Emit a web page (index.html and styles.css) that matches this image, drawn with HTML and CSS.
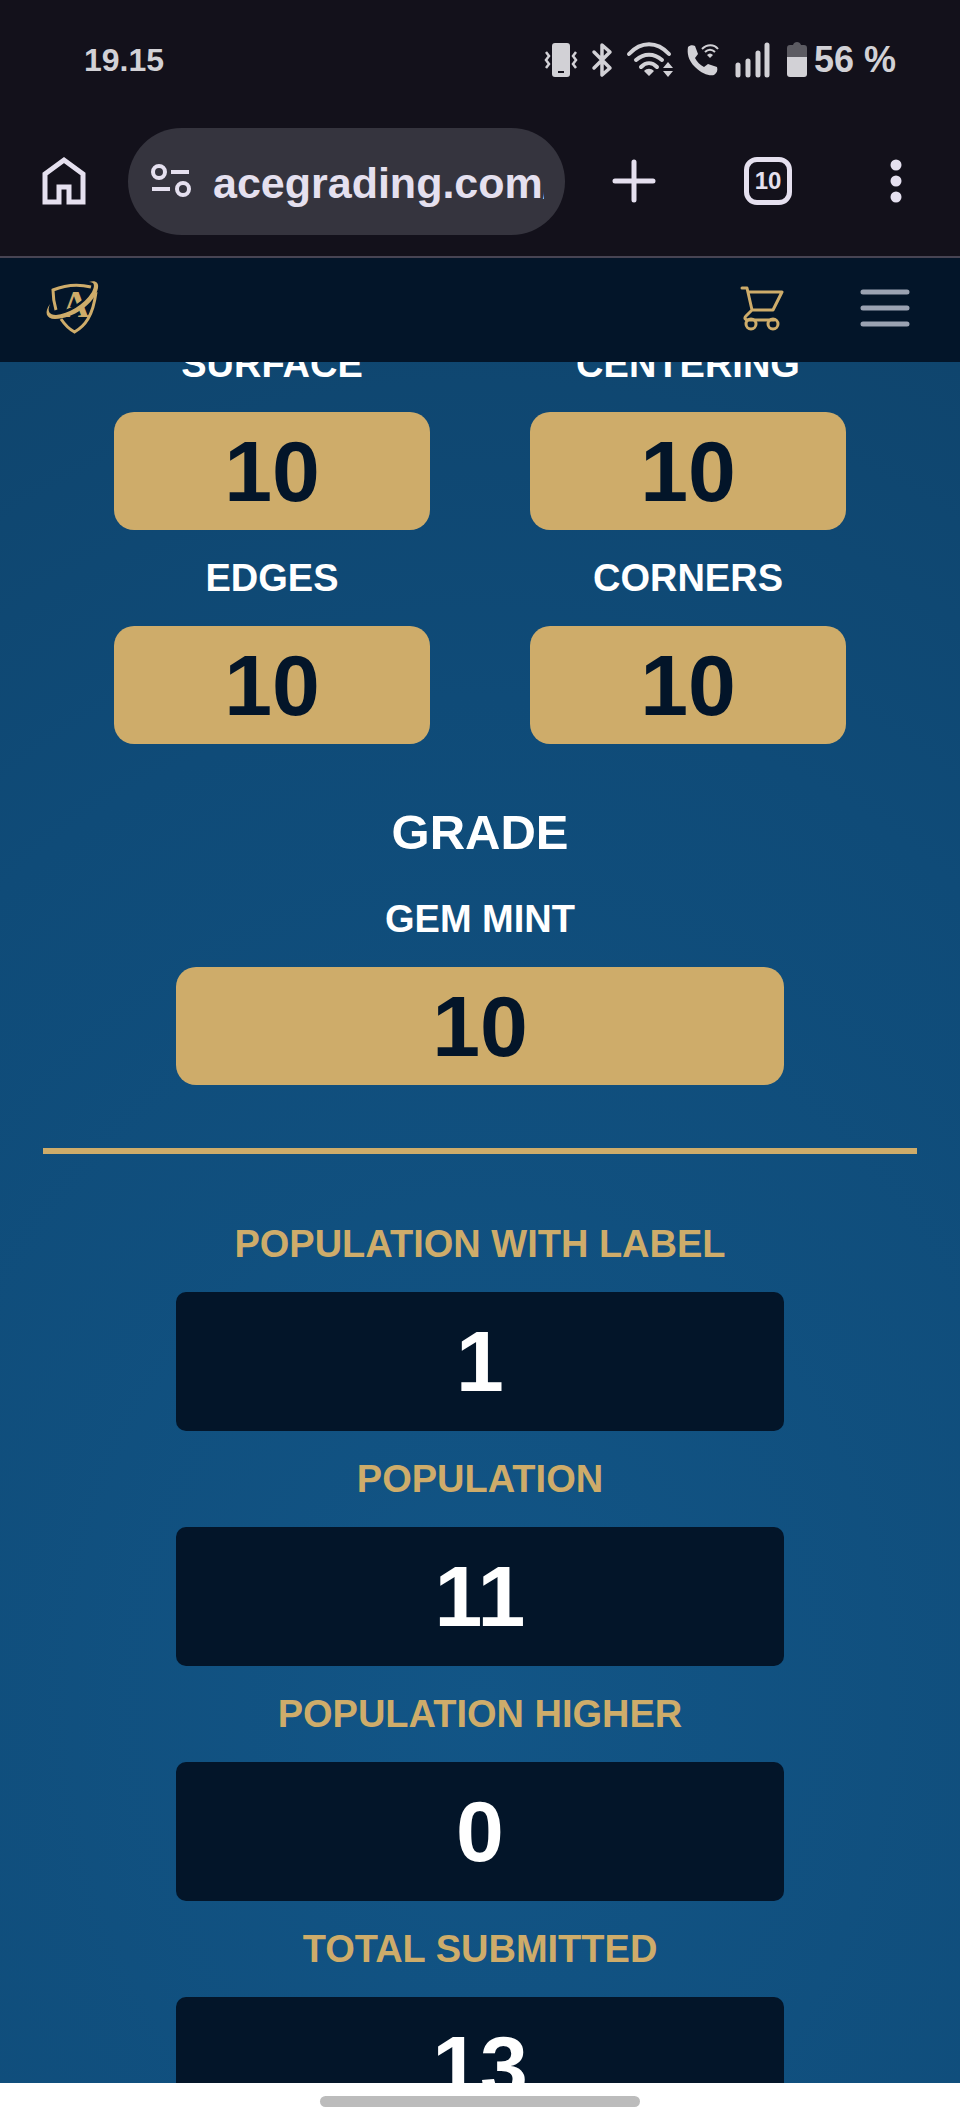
FILE: index.html
```html
<!DOCTYPE html>
<html lang="en">
<head>
    <meta charset="UTF-8">
    <meta name="viewport" content="width=device-width, initial-scale=1.0">
    <title>Ace Grading</title>
    <link rel="stylesheet" href="styles.css">
</head>
<body>
    <div class="status-bar">
        <span>19.15</span>
        <div class="status-icons">
            <!-- Vibrate -->
            <svg width="34" height="34" viewBox="0 0 34 34">
                <path fill-rule="evenodd" d="M11 0h12a3 3 0 0 1 3 3v28a3 3 0 0 1-3 3H11a3 3 0 0 1-3-3V3a3 3 0 0 1 3-3zM14 28v2h6v-2z" fill="#d2d1d6"/>
                <path d="M2 9l3 4-3 4 3 4-3 4M32 9l-3 4 3 4-3 4 3 4" fill="none" stroke="#d2d1d6" stroke-width="2.500"/>
            </svg>
            <!-- Bluetooth -->
            <svg width="21" height="34" viewBox="0 0 21 34">
                <path d="M2 9l16 16-8 7V2l8 7L2 25" fill="none" stroke="#d2d1d6" stroke-width="3.500" stroke-linejoin="round" stroke-linecap="round"/>
            </svg>
            <!-- Wifi -->
            <svg width="46" height="34" viewBox="0 0 46 34">
                <g fill="none" stroke="#d2d1d6" stroke-width="4" stroke-linecap="round">
                    <path d="M2 11C14-2 30-2 42 11M9 17c8-7 18-7 26 0M14 24c5-5 11-5 16 0"/>
                </g>
                <path d="M22 33l-5-5c3-3 7-3 10 0zM36 25l5-6 5 6zM36 28h10l-5 6z" fill="#d2d1d6"/>
            </svg>
            <!-- Wifi calling -->
            <svg width="33" height="34" viewBox="0 0 33 34">
                <path d="M1 4c2-2 5-2 7-1l3 8-3 4c2 4 5 7 9 9l4-3 9 3c1 3 0 6-3 8-5 1-12-1-19-8S0 10 1 4z" fill="#d2d1d6"/>
                <path d="M15 6c5-5 12-5 16 0M18 9c3-3 7-3 10 0" fill="none" stroke="#d2d1d6" stroke-width="2"/>
                <path d="M23 15l-3-3c2-2 4-2 6 0z" fill="#d2d1d6"/>
            </svg>
            <!-- Signal -->
            <svg width="37" height="34" viewBox="0 0 37 34">
                <path d="M4 22v10M14 18v14M24 10v22M33 2v30" stroke="#d2d1d6" stroke-width="5" stroke-linecap="round"/>
            </svg>
            <span class="battery">
                <svg width="24" height="36" viewBox="0 0 24 36">
                    <path d="M2 15V6a3 3 0 0 1 3-3h3c1-4 7-4 8 0h3a3 3 0 0 1 3 3v9z" fill="#5c5b62"/>
                    <path d="M2 15h20v17a3 3 0 0 1-3 3H5a3 3 0 0 1-3-3z" fill="#d2d1d6"/>
                </svg>
                <span>56 %</span>
            </span>
        </div>
    </div>

    <div class="browser-bar">
        <button class="icon-button" type="button" aria-label="Home">
            <svg width="44" height="50" viewBox="0 0 44 50">
                <path d="M3 46V18L22 4l19 14v28H27V31H17v15z" fill="none" stroke="#e5e0ef" stroke-width="5"/>
            </svg>
        </button>
        <div class="address">
            <svg width="41" height="34" viewBox="0 0 41 34">
                <g fill="none" stroke="#e5e0ef" stroke-width="4">
                    <circle cx="9" cy="8" r="6"/>
                    <circle cx="33" cy="25" r="6"/>
                    <path d="M21 8h18M2 25h18"/>
                </g>
            </svg>
            <input class="address-input" type="text" value="acegrading.com/" aria-label="Address">
        </div>
        <div class="browser-actions">
            <button class="icon-button" type="button" aria-label="New tab">
                <svg width="44" height="44" viewBox="0 0 44 44">
                    <path d="M22 3v38M3 22h38" stroke="#e5e0ef" stroke-width="5" stroke-linecap="round"/>
                </svg>
            </button>
            <button class="tab-count" type="button">10</button>
            <button class="icon-button" type="button" aria-label="More">
                <svg width="32" height="44" viewBox="0 0 32 44">
                    <g fill="#e5e0ef">
                        <circle cx="16" cy="6" r="5.5"/>
                        <circle cx="16" cy="22" r="5.5"/>
                        <circle cx="16" cy="38" r="5.5"/>
                    </g>
                </svg>
            </button>
        </div>
    </div>

    <header class="site-header">
        <a href="#" class="logo" aria-label="Ace Grading">
            <svg width="54" height="54" viewBox="0 0 54 54">
                <path d="M10 29C8 22 7 16 7 9c12-5 26-6 38-3M15 38c4 6 8 10 13.500 13C39 45 47 35 50 11" fill="none" stroke="#ceac6a" stroke-width="3"/>
                <text x="16" y="36" class="logo-letter">A</text>
                <path d="M10 33C24 34 41 22 49 8" fill="none" stroke="#031529" stroke-width="6"/>
                <path d="M4 23C-2 31 0 38 9 38 26 38 49 23 52 7 53 1 49-1 43 1c6 0 6 4 3 10C38 24 22 33 10 34 3 34 1 30 4 23z" fill="#ceac6a"/>
            </svg>
        </a>
        <div class="site-actions">
            <a href="#" class="cart" aria-label="Cart">
                <svg width="44" height="44" viewBox="0 0 44 44">
                    <g fill="none" stroke="#ceac6a" stroke-width="3" stroke-linejoin="round" stroke-linecap="round">
                        <path d="M2 2h5l5 22h21L42 6H8M12 24l-6 6c-2 2-1 4 2 4h26"/>
                        <circle cx="11" cy="38" r="5"/>
                        <circle cx="33" cy="38" r="5"/>
                    </g>
                </svg>
            </a>
            <button class="icon-button" type="button" aria-label="Menu">
                <svg width="50" height="38" viewBox="0 0 50 38">
                    <path d="M3 3h44M3 19h44M3 35h44" stroke="#9aa2b2" stroke-width="5" stroke-linecap="round"/>
                </svg>
            </button>
        </div>
    </header>

    <main class="content">
        <div class="report">
            <div class="subgrades">
                <div>
                    <h3>Surface</h3>
                    <div class="grade-box">10</div>
                </div>
                <div>
                    <h3>Centering</h3>
                    <div class="grade-box">10</div>
                </div>
                <div>
                    <h3>Edges</h3>
                    <div class="grade-box">10</div>
                </div>
                <div>
                    <h3>Corners</h3>
                    <div class="grade-box">10</div>
                </div>
            </div>

            <section class="overall">
                <h2>Grade</h2>
                <h3>Gem Mint</h3>
                <div class="grade-box">10</div>
            </section>

            <hr class="divider">

            <section class="population">
                <h3>Population with label</h3>
                <div class="population-box">1</div>
                <h3>Population</h3>
                <div class="population-box">11</div>
                <h3>Population higher</h3>
                <div class="population-box">0</div>
                <h3>Total submitted</h3>
                <div class="population-box">13</div>
            </section>
        </div>
    </main>

    <div class="gesture-bar">
        <div class="gesture-handle"></div>
    </div>
</body>
</html>
```

FILE: styles.css
```css
* {
    box-sizing: border-box;
}

body {
    margin: 0;
    height: 100vh;
    display: flex;
    flex-direction: column;
    overflow: hidden;
    background-color: #13111b;
    font-family: 'Liberation Sans', Arial, sans-serif;
    font-weight: bold;
}

svg {
    display: block;
    overflow: visible;
}

button {
    font: inherit;
    color: inherit;
}

/* Phone status bar */
.status-bar {
    display: flex;
    flex-shrink: 0;
    justify-content: space-between;
    align-items: center;
    height: 106px;
    padding: 14px 64px 0 84px;
    color: #d2d1d6;
    font-size: 32px;
}

.status-icons {
    display: flex;
    align-items: center;
    gap: 14px;
}

.battery {
    display: flex;
    align-items: center;
    gap: 5px;
    font-size: 36px;
}

/* Browser toolbar */
.browser-bar {
    display: flex;
    flex-shrink: 0;
    align-items: center;
    height: 152px;
    padding: 0 48px 0 42px;
    border-bottom: 2px solid #474453;
    color: #e5e0ef;
}

.icon-button {
    padding: 0;
    border: none;
    background: none;
}

.address {
    display: flex;
    flex: 1;
    align-items: center;
    gap: 22px;
    min-width: 0;
    height: 107px;
    margin: 0 47px 0 42px;
    padding: 0 21px 0 22px;
    border-radius: 54px;
    background-color: #35343e;
}

.address-input {
    flex: 1;
    min-width: 0;
    padding: 4px 0 0;
    border: none;
    outline: none;
    background: none;
    color: #e5e0ef;
    font: inherit;
    font-size: 43px;
}

.browser-actions {
    display: flex;
    align-items: center;
    gap: 88px;
}

.tab-count {
    width: 48px;
    height: 48px;
    padding: 0;
    border: 5px solid #e5e0ef;
    border-radius: 13px;
    background: none;
    font-size: 24px;
}

/* Site header */
.site-header {
    display: flex;
    flex-shrink: 0;
    justify-content: space-between;
    align-items: center;
    height: 104px;
    padding: 0 50px 4px 46px;
    background-color: #031529;
}

.site-actions {
    display: flex;
    align-items: center;
    gap: 76px;
}

.logo-letter {
    fill: #ceac6a;
    font-family: 'Liberation Serif', 'Times New Roman', serif;
    font-size: 38px;
}

/* Card report */
.content {
    flex: 1;
    min-height: 0;
    overflow: hidden;
    background: radial-gradient(ellipse 130% 90% at 50% 78%, #125586 0%, #0f4b78 65%, #0f446c 100%);
    color: white;
    text-align: center;
}

/* Scrolled partly under the header */
.report {
    margin-top: -46px;
    padding: 0 43px;
}

h2 {
    margin: 49px 0 0;
    font-size: 49px;
    line-height: 78px;
    text-transform: uppercase;
}

h3 {
    margin: 0;
    font-size: 38px;
    line-height: 96px;
    text-transform: uppercase;
}

.subgrades {
    display: grid;
    grid-template-columns: 1fr 1fr;
    column-gap: 100px;
    padding: 0 71px;
}

.grade-box {
    border-radius: 20px;
    background-color: #ceac6a;
    color: #031529;
    font-size: 86px;
    line-height: 118px;
}

.overall,
.population {
    padding: 0 133px;
}

.divider {
    height: 6px;
    margin: 63px 0 42px;
    border: none;
    background-color: #ceac6a;
}

.population h3 {
    color: #ceac6a;
}

.population-box {
    border-radius: 10px;
    background-color: #031529;
    font-size: 86px;
    line-height: 139px;
}

/* Gesture navigation */
.gesture-bar {
    display: flex;
    flex-shrink: 0;
    justify-content: center;
    height: 43px;
    padding-top: 13px;
    background-color: white;
}

.gesture-handle {
    width: 320px;
    height: 11px;
    border-radius: 6px;
    background-color: #bcbcbc;
}
```
